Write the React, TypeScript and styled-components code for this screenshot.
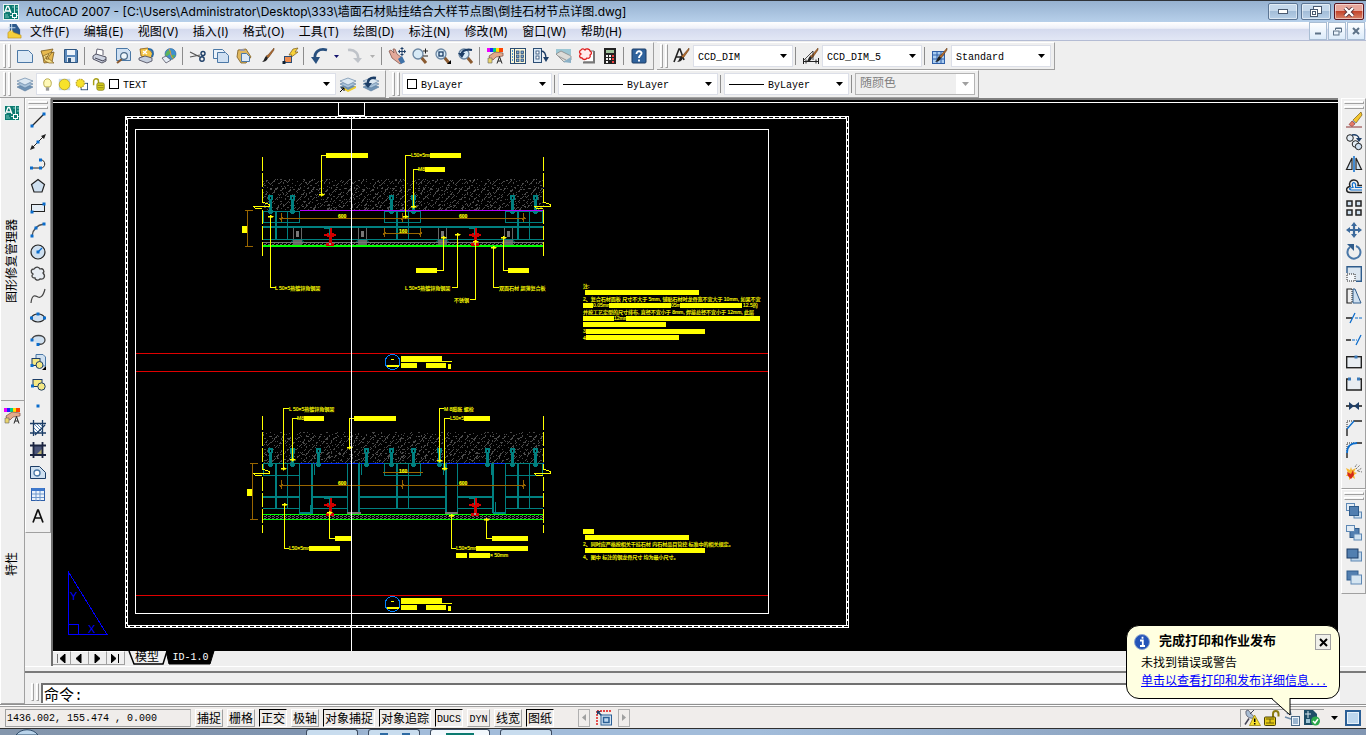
import React from 'react';
import styled, { createGlobalStyle, css } from 'styled-components';

const ui = `"Open Sans", "Noto Sans CJK SC", sans-serif`;
const wide = `Inter, "Noto Sans CJK SC", sans-serif`;
const mono = `"Liberation Mono", "Noto Sans CJK SC", monospace`;

const GlobalStyle = createGlobalStyle`
  *, *::before, *::after { box-sizing: border-box; }
  body { margin: 0; background: #efefef; color: #000; font-family: ${ui}; font-size: 12px; overflow: hidden; }
  button, input, select { font: inherit; color: inherit; margin: 0; padding: 0; border: 0; background: none; border-radius: 0; }
  svg { display: block; flex: none; }
`;

const Screen = styled.div`
  position: relative;
  display: flex;
  flex-direction: column;
  height: 100vh;
  overflow: hidden;
`;

/* ---------- title and menu ---------- */

const TitleBar = styled.header`
  display: flex;
  align-items: center;
  height: 22px;
  padding: 0 2px 0 3px;
  gap: 7px;
  border-top: 1px solid #2f3338;
  background: linear-gradient(#96b1d0, #b7d0ea);
`;
const Title = styled.h1`
  flex: 1;
  margin: 0;
  font-family: ${wide};
  font-size: 12px;
  line-height: 20px;
  font-weight: 400;
  white-space: nowrap;
`;
const WindowButtons = styled.div`
  display: flex;
  gap: 3px;
`;
const WindowButton = styled.button<{ $close?: boolean }>`
  display: grid;
  place-items: center;
  width: 30px;
  height: 17px;
  border: 1px solid ${p => (p.$close ? '#5a1420' : '#5b7594')};
  border-radius: 2px;
  background: ${p => (p.$close
    ? 'linear-gradient(#e8a79c 45%, #c4452c 50%, #d8836a)'
    : 'linear-gradient(#c5d8eb 45%, #a3bdd8 50%, #b8d0e8)')};
  box-shadow: inset 0 0 0 1px rgba(255, 255, 255, 0.5);
`;
const MenuBar = styled.nav`
  display: flex;
  align-items: center;
  height: 19px;
  padding-left: 7px;
  border-bottom: 1px solid #b4bcd4;
  background: linear-gradient(#fff 0, #eef0f8 35%, #d4daee 40%, #e2e7f5);
`;
const MenuList = styled.div`
  display: flex;
  flex: 1;
  padding-left: 1px;
`;
const MenuItem = styled.button`
  padding: 0 7px;
  height: 18px;
  font-family: ${wide};
  line-height: 20px;
  white-space: nowrap;
`;
const MdiButtons = styled.div`
  display: flex;
  gap: 1px;
  padding-right: 1px;
`;
const MdiButton = styled.button`
  display: grid;
  place-items: center;
  width: 18px;
  height: 18px;
  border: 1px solid #a9bdd3;
  background: linear-gradient(#fff, #dcebfa);
`;

/* ---------- toolbars ---------- */

const ToolbarArea = styled.div`
  height: 57px;
  display: flex;
  flex-direction: column;
  padding-top: 1px;
`;
const ToolbarRow = styled.div`
  display: flex;
  gap: 3px;
  height: 28px;
`;
const Toolbar = styled.div`
  display: flex;
  align-items: center;
  height: 28px;
  padding-right: 3px;
  border: 1px solid #fff;
  border-right-color: #a0a0a0;
  border-bottom-color: #a0a0a0;
  border-left: 0;
`;
const Grip = styled.div<{ $flat?: boolean }>`
  flex: none;
  display: flex;
  gap: 2px;
  ${p => (p.$flat
    ? css`flex-direction: column; width: 20px; margin: 2px auto 0;`
    : css`height: 24px; padding: 0 2px 0 3px;`)}
  &::before, &::after {
    content: '';
    ${p => (p.$flat ? css`height: 3px;` : css`width: 3px;`)}
    border: 1px solid #a0a0a0;
    border-top-color: #fff;
    border-left-color: #fff;
    background: #f6f6f6;
  }
`;
const ToolButton = styled.button<{ $w?: number }>`
  display: grid;
  place-items: center;
  flex: none;
  width: ${p => p.$w ?? 23}px;
  height: 22px;
`;
const Separator = styled.div`
  flex: none;
  width: 1px;
  height: 18px;
  margin: 0 3px 0 2px;
  background: #8c8c8c;
`;
const ComboBox = styled.label<{ $w: number; $off?: boolean }>`
  display: flex;
  align-items: center;
  gap: 4px;
  width: ${p => p.$w}px;
  height: 22px;
  padding: 0 5px 0 4px;
  border: 1px solid ${p => (p.$off ? '#b4b4b4' : '#dcdfe8')};
  background: ${p => (p.$off ? 'linear-gradient(90deg, #efefef 100px, #fff 100px)' : '#fff')};
  color: ${p => (p.$off ? '#808080' : '#000')};
`;
const ComboSelect = styled.select<{ $big?: boolean }>`
  appearance: none;
  flex: 1;
  min-width: 0;
  height: 20px;
  padding-top: ${p => (p.$big ? 0 : 2)}px;
  outline: 0;
  opacity: 1;
  font-family: ${mono};
  font-size: ${p => (p.$big ? 12 : 10)}px;
`;
const Swatch = styled.span`
  width: 10px;
  height: 10px;
  border: 1px solid #000;
  background: #fff;
`;
const LineSample = styled.span<{ $w: number }>`
  width: ${p => p.$w}px;
  height: 1px;
  background: #000;
`;

/* ---------- work area ---------- */

const Main = styled.main`
  flex: 1;
  min-height: 0;
  display: flex;
`;
const PaletteColumn = styled.aside`
  display: flex;
  flex-direction: column;
  width: 25px;
  border-right: 1px solid #a0a0a0;
  border-left: 1px solid #fff;
`;
const Palette = styled.section`
  flex: 1 1 0;
  display: flex;
  flex-direction: column;
  align-items: center;
  padding: 7px 2px 0 0;
  border-bottom: 1px solid #a0a0a0;
`;
const PaletteTitle = styled.div`
  flex: 1;
  writing-mode: vertical-rl;
  text-orientation: sideways;
  transform: rotate(180deg);
  text-align: center;
  line-height: 18px;
`;
const Workspace = styled.div`
  flex: 1;
  min-width: 0;
  display: flex;
  flex-direction: column;
`;
const WorkRow = styled.div`
  flex: 1;
  min-height: 0;
  display: flex;
`;
const SideColumn = styled.div<{ $w: number }>`
  width: ${p => p.$w}px;
  padding-left: ${p => (p.$w > 26 ? 3 : 0)}px;
  flex: none;
`;
const VerticalToolbar = styled.div`
  display: flex;
  flex-direction: column;
  align-items: center;
  padding-bottom: 5px;
  border: 1px solid #fff;
  border-right-color: #a0a0a0;
  border-bottom: 1px solid #a0a0a0;
`;
const Document = styled.div`
  flex: 1;
  min-width: 0;
  display: flex;
  flex-direction: column;
  border-left: 2px solid #707070;
  border-top: 2px solid #808080;
`;
const Canvas = styled.div`
  flex: 1;
  min-height: 0;
  background: #000;
  overflow: hidden;
`;
const TabRow = styled.div`
  display: flex;
  height: 15px;
`;
const TabNav = styled.button`
  display: grid;
  place-items: center;
  width: 18px;
  height: 14px;
  border-right: 1px solid #a0a0a0;
  border-bottom: 1px solid #a0a0a0;
  border-top: 1px solid #fff;
`;
const Tab = styled.button<{ $on?: boolean; $w: number }>`
  position: relative;
  width: ${p => p.$w}px;
  height: 14px;
  margin-left: ${p => (p.$on ? 3 : 0)}px;
  font-family: ${mono};
  font-size: ${p => (p.$on ? 12 : 10)}px;
  line-height: 14px;
  color: ${p => (p.$on ? '#000' : '#fff')};
`;
const TabShape = styled.svg`
  position: absolute;
  left: 0;
  top: 0;
  z-index: 0;
`;
const TabLabel = styled.span`
  position: relative;
`;
const Splitter = styled.div`
  height: 7px;
  border-top: 1px solid #fff;
  border-bottom: 2px solid #7a7a7a;
`;
const CommandRow = styled.div`
  display: flex;
  height: 31px;
  padding: 10px 26px 0 3px;
`;
const CommandGrip = styled(Grip)`
  height: 18px;
`;
const CommandInput = styled.input`
  flex: 1;
  height: 20px;
  padding-left: 1px;
  border-top: 2px solid #707070;
  border-left: 2px solid #707070;
  background: #fff;
  font-family: ${mono};
  font-size: 15px;
  outline: 0;
`;

/* ---------- status bar ---------- */

const StatusBar = styled.footer`
  display: flex;
  align-items: center;
  height: 25px;
  padding: 2px 4px 0 5px;
  border-top: 1px solid #909090;
  border-bottom: 1px solid #303030;
  background: #f0edeb;
  box-shadow: inset 0 1px #fff, inset 0 2px #a0a0a0;
`;
const Readout = styled.output`
  width: 186px;
  height: 18px;
  padding-left: 1px;
  border: 1px solid #a0a0a0;
  border-right-color: #c0c0c0;
  font-family: ${mono};
  font-size: 10px;
  line-height: 18px;
  white-space: pre;
`;
const Toggles = styled.div`
  display: flex;
  gap: 4px;
  margin-left: 4px;
`;
const Toggle = styled.button<{ $on?: boolean; $w: number; $small?: boolean }>`
  width: ${p => p.$w}px;
  height: 18px;
  padding-top: 2px;
  border: 1px solid;
  border-color: ${p => (p.$on ? '#000 #fff #fff #000' : '#fff #a0a0a0 #a0a0a0 #fff')};
  font-family: ${mono};
  font-size: ${p => (p.$small ? 10 : 12)}px;
  line-height: 16px;
  white-space: nowrap;
`;
const LayoutNav = styled.div`
  display: flex;
  align-items: center;
  gap: 4px;
  margin-left: 24px;
  flex: 1;
`;
const NavButton = styled.button`
  display: grid;
  place-items: center;
  width: 12px;
  height: 18px;
  border: 1px solid #b0b0b0;
`;
const Tray = styled.div`
  display: flex;
  align-items: center;
  gap: 4px;
  width: 84px;
  height: 18px;
  padding-left: 3px;
  border-top: 1px solid #a0a0a0;
  border-left: 1px solid #a0a0a0;
`;
const TaskBar = styled.div`
  display: flex;
  gap: 10px;
  height: 6px;
  background: linear-gradient(90deg, #8496ac, #7f94b0 300px, #a2bcda 380px, #a2bcda 760px, #8196b2);
`;
const StartArea = styled.div`
  width: 296px;
  padding-left: 16px;
`;
const TaskItem = styled.span<{ $on?: boolean }>`
  display: grid;
  justify-items: center;
  align-items: end;
  width: ${p => (p.$on ? 60 : 52)}px;
  height: 6px;
  border: 1px solid #3c4b60;
  border-bottom: 0;
  border-radius: 3px 3px 0 0;
  background: ${p => (p.$on ? '#f2f8fd' : '#c8dcee')};
`;

/* ---------- notification ---------- */

const Balloon = styled.section`
  position: absolute;
  right: 26px;
  bottom: 36px;
  width: 214px;
  height: 74px;
  padding: 6px 8px 0 7px;
  border: 1px solid #000;
  border-radius: 13px;
  background: #ffffe1;
`;
const BalloonHead = styled.div`
  display: flex;
  align-items: center;
  gap: 9px;
  height: 20px;
`;
const BalloonTitle = styled.h2`
  flex: 1;
  margin: 0;
  padding-bottom: 4px;
  font-size: 13px;
  line-height: 16px;
  font-weight: 700;
`;
const BalloonClose = styled.button`
  display: grid;
  place-items: center;
  width: 16px;
  height: 16px;
  border: 1px solid #a0a0a0;
  background: #f0f0ea;
`;
const BalloonBody = styled.div`
  padding: 3px 0 0 7px;
`;
const BalloonText = styled.p`
  margin: 0;
  line-height: 18px;
  font-family: ${mono};
  white-space: nowrap;
`;
const BalloonLink = styled.a`
  color: #00f;
  text-decoration: underline;
`;
const Dots = styled.span`
  font-size: 10px;
`;
const BalloonTail = styled.svg`
  position: absolute;
  right: 47px;
  top: 71px;
`;

/* ---------- icons ---------- */

const N = '#1c3d66';
const B = '#0a6ccc';
const L = '#cfe0f0';
const K = '#222';

const Dot = ({ x, y, c = B }: { x: number; y: number; c?: string }) => (
  <rect x={x - 1.5} y={y - 1.5} width={3} height={3} fill={c} stroke="none" />
);
const Ln = ({ d, c = K, w = 1, f = 'none', dash }: { d: string; c?: string; w?: number; f?: string; dash?: string }) => (
  <path d={d} stroke={c} strokeWidth={w} fill={f} strokeDasharray={dash} />
);
const Sheets = ({ y = 0 }: { y?: number }) => (
  <g stroke="#55779a" strokeWidth=".6">
    <path d={`M0 ${11 + y}l8-3 8 3-8 4z`} fill="#6f93b5" />
    <path d={`M0 ${8 + y}l8-3 8 3-8 4z`} fill="#a9c3da" />
    <path d={`M0 ${5 + y}l8-3 8 3-8 4z`} fill="#dce8f2" />
  </g>
);
const Brush = () => (
  <>
    <path d="M15 0l-6 7-2 1 2 2 1-1 5-7z" fill="#b06a2c" stroke="#5a3414" strokeWidth=".5" />
    <path d="M7 8l2 2c-1 3-4 4-6 4 2-1 2-4 4-6z" fill="#222" />
  </>
);
const Mag = () => (
  <>
    <path d="M9 9l5 6" stroke="#8a5a30" strokeWidth="3" />
    <circle cx="6" cy="6" r="5" fill="#d8eaf6" stroke="#6b86a2" strokeWidth="1.3" />
  </>
);

const icons: Record<string, React.ReactNode> = {
  app: <><rect width="16" height="16" fill="#e8f4f2" /><rect x="1" y="1" width="14" height="14" fill="#0b7a70" /><path d="M1.500 9L4 2.500h1.500L8 9M3 7h4" stroke="#fff" strokeWidth="1.300" fill="none" /><path d="M11.500 1v14M7 11.500h8" stroke="#bfe8e2" fill="none" /><path d="M9 3h2M13 3h2M13 6h2M2 11h3M2 13h4" stroke="#7cc4bb" fill="none" /><rect x="9.500" y="9.500" width="4" height="4" fill="#0b7a70" stroke="#fff" /></>,
  dwg: <><path d="M3 0h7l4 6v6H3z" fill="#2d5a8c" /><path d="M1 9l4-3 2 3 8 3v3H1z" fill="#f4cf3c" stroke="#b88a14" strokeWidth=".6" /><path d="M5 0v8M1 4h8" stroke="#cfe3f5" /></>,
  new: <path d="M.5 2.500h11l4 4v8H.5z" fill="#dce9f5" stroke="#4b78a6" />,
  open: <><path d="M1 3l12-2-2 4 3-1-2 10-8 1-1-6z" fill="#e7b94f" stroke="#7a5a1e" strokeWidth=".8" /><path d="M3 8l9-4-4 6 6 5-5 0-4-2z" fill="#f7e08b" stroke="#7a5a1e" strokeWidth=".7" /><path d="M9 6l-3 5M6 8v3h3" stroke="#8a6220" fill="none" /></>,
  save: <><path d="M1.500 1.500h12l1 1v12h-13z" fill="#5b89bb" stroke="#2d5580" /><rect x="4" y="2" width="8" height="5" fill="#eef4fa" /><rect x="4" y="9" width="8" height="5" fill="#dfe9f3" /><rect x="5" y="10" width="3" height="4" fill="#2d5580" /></>,
  print: <><path d="M4 7l1-6 6 1v5" fill="#fff" stroke="#556" strokeWidth=".9" /><path d="M1 8l3-2 10 3v4l-4 2-9-4z" fill="#cdd3e0" stroke="#445" strokeWidth=".9" /><path d="M3 10l8 3M11 13l3-2" stroke="#445" /></>,
  preview: <><path d="M1.500 .5h11l3 3v9h-14z" fill="#cfe0f2" stroke="#4b78a6" /><path d="M7 11l-5 4" stroke="#8a5a30" strokeWidth="2.200" /><circle cx="9" cy="8" r="3.400" fill="#eef6fb" stroke="#4b6a88" strokeWidth="1.200" /></>,
  publish: <><path d="M2 1l8-1 5 6-3 5-9-3z" fill="#f3c546" stroke="#8a5a14" strokeWidth=".8" /><path d="M5 3l4 3M9 2L5 6" stroke="#fff" strokeWidth="1.300" /><path d="M1 10l6-2 7 2v3l-5 2-8-3z" fill="#c6cfdd" stroke="#445" strokeWidth=".8" /><path d="M10 1c5 0 6 4 4 8" stroke="#2d6aa3" strokeWidth="2" fill="none" /></>,
  globe: <><circle cx="9.500" cy="6" r="5.500" fill="#3f8fd0" stroke="#2a5f92" strokeWidth=".6" /><path d="M6 3c3-2 6 1 3 3s-3 3-5 1zM10 8c2-2 4-1 4 0l-3 3z" fill="#5cb35a" /><path d="M8 1c2 2 1 8 5 10" stroke="#f0913a" fill="none" /><path d="M1 10l4-2 5 4-5 3z" fill="#e6edf5" stroke="#556" strokeWidth=".8" /></>,
  cut: <><path d="M0 4l10 5M0 9l10-2" stroke="#555" strokeWidth="1.200" /><circle cx="13" cy="5.500" r="2" fill="none" stroke={N} strokeWidth="1.400" /><circle cx="12" cy="11" r="2.200" fill="none" stroke={N} strokeWidth="1.400" /></>,
  copy: <><path d="M.5 1.500h9l2 2v7H.5z" fill="#eaf2fa" stroke="#4b78a6" /><path d="M4.500 4.500h8l3 3v7h-11z" fill="#cfe0f2" stroke="#4b78a6" /></>,
  paste: <><path d="M2 2l8-1 5 8-5 6H5L1 9z" fill="#e0b85e" stroke="#7a5a1e" strokeWidth=".8" /><path d="M5.500 5.500h5l3 3v5h-8z" fill="#dce9f5" stroke="#4b78a6" /><path d="M4 1h4l1 2H4z" fill="#99a" /></>,
  match: <Brush />,
  block: <><path d="M11 1l-4 6 3 0-3 4 9-7h-3l3-4z" fill="#f7d23a" stroke="#7a5a1e" strokeWidth=".7" /><rect x="2.500" y="8.500" width="7" height="6" fill="#f08c4c" stroke="#2b4d74" /><Dot x={2} y={14.5} c="#123" /></>,
  undo: <><path d="M16 2C8 0 3 4 4 11" fill="none" stroke="#274f7e" strokeWidth="2.800" /><path d="M0 9h9l-4 7z" fill="#274f7e" /></>,
  redo: <><path d="M1 2c7-1 11 4 10 10" fill="none" stroke="#bfc3c9" strokeWidth="2.600" /><path d="M6 10h9l-4 5z" fill="#bfc3c9" /></>,
  pan: <><path d="M0 3l2-1 3 3-1-4 2 0 2 5 4 3 2 5-3 2-4-3-4-3z" fill="#e3a99a" stroke="#7a4a40" strokeWidth=".7" /><path d="M9 11l4-3 3 6-4 2z" fill="#3f72a8" /><path d="M13 0v7M9.500 3.500h7" stroke={N} /><path d="M13-1l2 2h-4zM13 8l2-2h-4zM9 3.500l2-2v4zM17 3.500l-2-2v4z" fill={N} /></>,
  zoomrt: <><Mag /><path d="M11 3h5M13.500 .5v5M11 8h5" stroke={K} /></>,
  zoomwin: <><Mag /><rect x="4" y="4" width="4" height="4" fill="none" stroke={N} strokeWidth="1.300" /><path d="M16 12v4h-4z" fill="#000" /></>,
  zoomprev: <><Mag /><path d="M3 7c1-4 5-6 11-5" stroke={N} strokeWidth="2.200" fill="none" /><path d="M0 5h7l-3 5z" fill={N} /></>,
  props: <><rect width="3" height="4" fill="#e0f" /><rect x="3" width="3" height="4" fill="#22f" /><rect x="6" width="3" height="4" fill="#0c8" /><rect x="9" width="3" height="4" fill="#fd0" /><rect x="12" width="4" height="4" fill="#f40" /><path d="M2 8l6-4 8 1 0 3-7 1-3 3-3-1z" fill="#e3a98a" stroke="#7a4a40" strokeWidth=".7" /><path d="M1 10h4v5H1z" fill="#e9d36c" stroke="#666" strokeWidth=".6" /><path d="M10 15.500l2.500-7 2.500 7M11 13h3" stroke={K} fill="none" /></>,
  dc: <><rect x=".5" y=".5" width="15" height="15" fill="#fdf8d8" stroke="#2b4d74" /><path d="M4.500 1v14" stroke="#2b4d74" /><path d="M2 3h1M2 6h1M2 9h1M2 12h1" stroke={B} strokeWidth="1.500" /><g fill="#7faad4" stroke="#2b4d74" strokeWidth=".8"><rect x="6.500" y="3" width="2.500" height="2.500" /><rect x="11" y="3" width="2.500" height="2.500" /><rect x="6.500" y="7" width="2.500" height="2.500" /><rect x="11" y="7" width="2.500" height="2.500" /><rect x="6.500" y="11" width="2.500" height="2.500" /><rect x="11" y="11" width="2.500" height="2.500" /></g></>,
  tp: <><rect x=".5" y=".5" width="8" height="14" fill="#dce9f5" stroke="#2b4d74" /><g fill="#fff" stroke="#2b4d74" strokeWidth=".8"><rect x="3" y="3" width="3" height="3" /><rect x="3" y="8" width="3" height="3" /></g><path d="M8 3c4 0 5 3 5 8" stroke={N} fill="none" strokeWidth="1.400" /><path d="M10 9h6l-3 5z" fill={N} /></>,
  ssm: <><rect x="0" y="1" width="15" height="6" fill="#9cc7d4" /><path d="M0 6l5-3 10 5v4L8 14z" fill="#dcdcd8" stroke="#888" strokeWidth=".8" /><path d="M2 8l8 4" stroke="#999" /><path d="M7 14l8-5v6z" fill="#8bb0c6" /></>,
  markup: <><path d="M3 3h12v11H5" fill="#fff" stroke="#777" /><path d="M15 3v11.500H4" stroke="#777" strokeWidth="2" fill="none" /><path d="M2 2c1-2 3-1 4 0 1-2 5-1 5 1 2 1 2 3 0 4 1 2-1 4-3 3-1 2-4 2-5 0-3 0-3-3-1-4-2-1-2-3 0-4z" fill="#ffecec" stroke="#e02020" strokeWidth="1.300" /></>,
  calc: <><rect x="2" y="0" width="12" height="16" fill="#222" /><rect x="4" y="2" width="8" height="3" fill="#9ec29a" /><g fill="#f4f4f4"><rect x="4" y="7" width="2" height="2" /><rect x="7" y="7" width="2" height="2" /><rect x="4" y="10" width="2" height="2" /><rect x="7" y="10" width="2" height="2" /><rect x="4" y="13" width="2" height="2" /></g><g fill="#f04040"><rect x="10" y="7" width="2" height="2" /><rect x="10" y="10" width="2" height="2" /><rect x="10" y="13" width="2" height="2" /></g></>,
  help: <><rect x="1" y="1" width="14" height="14" rx="1" fill="#2f629c" stroke="#1c3d66" /><path d="M5.500 6c0-4 5.500-3 5-.5C10.500 7 8 7.500 8 10M8 11.500v2" stroke="#fff" strokeWidth="1.900" fill="none" /></>,
  textstyle: <><path d="M0 14L5 1h1l4 11M2 9h6" stroke={K} strokeWidth="1.600" fill="none" /><Brush /></>,
  dimstyle: <><Brush /><path d="M1 12l9-9v9" stroke={K} fill="none" strokeWidth=".8" /><path d="M0 13.500h16M.5 10v6M15.500 10v6M3 11.500v4M13 11.500v4" stroke={K} /></>,
  tablestyle: <><rect x=".5" y="3.500" width="12" height="12" fill="#a9cdf2" stroke="#2f5fa8" /><path d="M1 7h12M1 11h12M5 4v12M9 4v12" stroke="#2f5fa8" /><Brush /></>,
  layers: <Sheets />,
  layerCur: <><Sheets /><path d="M3 11l5 3 8-4v2l-8 4-5-3z" fill="#f2cf2e" /><path d="M0 16l4-4M1 12h3v3" stroke="#000" fill="none" /></>,
  layerPrev: <><Sheets /><path d="M5 9c-1-5 2-8 8-7" stroke={N} strokeWidth="2.400" fill="none" /><path d="M1 7h8l-4 5z" fill={N} /></>,
  bulb: <><path d="M5 11C2 8 3 1 8 1s6 7 3 10z" fill="#fff9b8" stroke="#a89a30" /><path d="M6 12.500h4M6 14.500h4" stroke="#777" strokeWidth="1.500" /></>,
  sun: <><rect x="1" y="1" width="14" height="14" fill="#c5d8ea" /><circle cx="8" cy="8" r="6.500" fill="#f7e22a" stroke="#b8a020" /></>,
  sunvp: <><rect x="7.500" y="6.500" width="8" height="8" fill="#fff" stroke={N} /><circle cx="6.500" cy="6.500" r="5" fill="#f7e22a" stroke="#c0a830" strokeDasharray="2 1" strokeWidth="1.600" /></>,
  lock: <><path d="M2 9V4c0-4 6-4 6 0v3" stroke="#a8a018" strokeWidth="1.800" fill="none" /><rect x="6" y="6" width="9" height="9" rx="2" fill="#d8d020" stroke="#807a10" /><path d="M7 9h7M7 12h7" stroke="#807a10" /></>,
  line: <><Ln d="M2 14L14 2" w={1.200} /><Dot x={2} y={14} /><Dot x={14} y={2} /></>,
  xline: <><Ln d="M1 15L15 1" /><path d="M0 16l2-5 3 3zM16 0l-5 2 3 3z" fill={K} /><Dot x={8} y={8} /></>,
  pline: <><Ln d="M2 12h9c5 0 5-8 0-8" /><Dot x={1.5} y={12} /><Dot x={10.5} y={12} /><Dot x={10.5} y={4} /></>,
  polygon: <path d="M8 1.500l6.500 5-2.500 7.500H4L1.500 6.500z" fill={L} stroke={K} strokeWidth="1.200" />,
  rect: <><rect x="1.500" y="4.500" width="13" height="7" fill="#e4edf5" stroke={K} /><Dot x={2} y={12} /><Dot x={14} y={4} /></>,
  arc: <><Ln d="M2 14C3 7 7 3 14 2" c="#555" w={1.300} /><Dot x={2} y={14} /><Dot x={6} y={6} /><Dot x={14} y={2} /></>,
  circle: <><circle cx="8" cy="8" r="7" fill={L} stroke={K} strokeWidth="1.200" /><Ln d="M8 8l4-4" c={B} w={1.300} /><Dot x={8} y={8} /></>,
  cloud: <path d="M4 3c2-3 5-2 6 0 3-1 5 2 3 4 3 3 1 7-3 6-2 2-5 1-5-1-3 0-4-2-2-4-3-2-2-5 1-5z" fill="#e8edf3" stroke="#444" strokeWidth="1.300" />,
  spline: <Ln d="M1 15C2 5 6 8 8 9s5 0 7-8" c="#444" w={1.200} />,
  ellipse: <><ellipse cx="8" cy="8" rx="6.500" ry="4" fill={L} stroke={K} strokeWidth="1.200" /><Dot x={1.5} y={8} /><Dot x={14.5} y={8} /><Dot x={8} y={4} /></>,
  earc: <><path d="M2 8c0-6 13-6 13 0 0 3-3 5-7 4" fill={L} stroke="#444" strokeWidth="1.300" /><Dot x={2} y={8} /><Dot x={8} y={12.5} /></>,
  insert: <><path d="M6 .5h7l2.500 2.500v9H6z" fill={L} stroke="#4b78a6" /><rect x="2" y="4.500" width="8" height="7" fill="#f5e883" stroke={N} /><circle cx="9.500" cy="11" r="3.500" fill="#f5e883" stroke={N} /><Dot x={2} y={11.5} /><path d="M16 12v4h-4z" fill="#000" /></>,
  mkblock: <><rect x="3" y="3.500" width="9" height="7" fill="#f5e883" stroke={N} /><circle cx="11.500" cy="10.500" r="3.700" fill="#f5e883" stroke={N} /><Dot x={2.5} y={10} /></>,
  point: <Dot x={8} y={8} />,
  hatch: <><rect x="3" y="4" width="10" height="9" fill="#fff" /><path d="M3 7l6 6M3 10l3 3M4 4l9 9M7 4l6 6M10 4l3 3" stroke="#5e8cba" /><Ln d="M0 3.500h16M0 13h16M3.500 0v16M12.500 0v16M5 15L15 5" c={N} w={1.300} /></>,
  gradient: <><rect x="3" y="4" width="10" height="9" fill="#4c567a" /><path d="M6 13L13 6v7z" fill="#b8b070" /><Ln d="M0 3.500h16M0 13h16M3.500 0v16M12.500 0v16" c="#1b2440" w={1.800} /></>,
  region: <><path d="M.5 2.500h9l6 6v6H.5z" fill={L} stroke={N} /><circle cx="7" cy="9" r="3" fill="#fff" stroke="#4b78a6" strokeWidth="1.300" /></>,
  table: <><rect x="1.500" y="2.500" width="13" height="12" fill="#eaf2fb" stroke="#2f5fa8" /><rect x="1.500" y="2" width="13" height="3" fill="#3f79cc" /><path d="M2 8h12M2 11.500h12M6 5v10M10 5v10" stroke="#6f97cc" /></>,
  mtext: <path d="M3 14.500L7.700 2h.6L13 14.500M4.500 10h7" stroke="#111" strokeWidth="1.700" fill="none" />,
  erase: <><path d="M0 15h16" stroke="#8a3030" /><path d="M15 0l-8 8 3 3 6-8z" fill="#f4c62e" stroke="#7a5a14" strokeWidth=".7" /><path d="M7 8l3 3-1 1-3-3z" fill="#9ab" /><path d="M6 9l3 3-3 2.500-3-2z" fill="#e57a68" stroke="#8a3030" strokeWidth=".6" /></>,
  copyobj: <><circle cx="4" cy="4" r="3.300" fill="#e4edf5" stroke={K} /><circle cx="9.500" cy="10" r="3.300" fill="#e4edf5" stroke={K} /><circle cx="12.500" cy="12.500" r="3.200" fill={L} stroke={K} /><path d="M6 1c4-1 7 1 7 4" stroke={N} fill="none" strokeWidth="1.400" /><path d="M10 4h6l-3 4z" fill={N} /></>,
  mirror: <><path d="M6 2v11.500H.5zM10 2v11.500h5.500z" fill={L} stroke={K} strokeWidth="1.200" /><Ln d="M8 0v16" c={B} w={1.500} /></>,
  offset: <><path d="M16 14.500H4c-4 0-5-5 0-6C1 0 14 0 12 7.500h4" fill="none" stroke={K} strokeWidth="1.400" /><path d="M16 12H5c-3-1-1-2.500 2-2.500C4 3 11 3 9.500 9.500H16" fill="none" stroke={B} strokeWidth="1.200" /></>,
  array: <g fill={L} stroke={K} strokeWidth="1.500"><rect x="1" y="1" width="5" height="5" /><rect x="10" y="1" width="5" height="5" /><rect x="1" y="10" width="5" height="5" /><rect x="10" y="10" width="5" height="5" /></g>,
  move: <><Ln d="M8 2v12M2 8h12" c="#3c6a9c" w={2.200} /><path d="M8 0l3 4H5zM8 16l3-4H5zM0 8l4-3v6zM16 8l-4-3v6z" fill="#3c6a9c" /></>,
  rotate: <><path d="M4 3a6.500 6.500 0 1 0 6-1" fill="none" stroke="#4a78a8" strokeWidth="2" /><path d="M1 0h7v7z" fill="#2f5c8c" /></>,
  scale: <><path d="M1 7V.7h14.300v14.600H10" fill="#dbe6f0" stroke="#2f5c8c" strokeWidth="1.400" /><rect x="1" y="8" width="8" height="7" fill="#f2f6fa" stroke={K} strokeDasharray="1 1" /></>,
  stretch: <><path d="M6 1H1v14h5" fill="none" stroke={K} strokeWidth="1.200" /><path d="M7 1v14h8L9 1z" fill={L} stroke="#2f5c8c" /><Ln d="M6 1v14" dash="1 1" /></>,
  trim: <><Ln d="M0 8h6" w={1.500} /><Ln d="M4 13L9 3" c={B} w={1.300} /><Ln d="M9 8h7" c={B} dash="3 1" /></>,
  extend: <><Ln d="M0 8h5" w={1.500} /><Ln d="M6 8h5" c={B} dash="3 1" /><Ln d="M10 13L15 3" c={B} w={1.300} /></>,
  breakpt: <><rect x=".7" y="2.700" width="14.600" height="11" fill="#e8edf2" stroke={K} strokeWidth="1.400" /><Dot x={10} y={3} c="#3c7ab8" /></>,
  brk: <><path d="M2 3H.7v11h14.600V3H14" fill="#e8edf2" stroke={K} strokeWidth="1.400" /><Dot x={3.5} y={3} c="#3c7ab8" /><Dot x={12.5} y={3} c="#3c7ab8" /></>,
  join: <><Ln d="M0 8h16" w={1.600} /><path d="M3 4l5 4-5 4zM13 4L8 8l5 4z" fill={N} /></>,
  chamfer: <><Ln d="M1 16V9M8 1h8" w={1.400} /><Ln d="M1 9V1h7" dash="1 1" /><Ln d="M1 9l7-8" c={B} w={1.300} /></>,
  fillet: <><Ln d="M1 16v-5M10 1h6" w={1.400} /><Ln d="M1 9V1h7" dash="1 1" /><Ln d="M1 11C1 4 5 1 11 1" c={B} w={1.800} /></>,
  explode: <><path d="M0 4l4 2 1-3 1 3 4-2-2 4 3 1-3 2 1 4-3-2-3 3v-4l-3 0 2-3z" fill="#f7b62e" /><path d="M1 8l4 2 2-4 1 5-3 4-3-3z" fill="#d42a1a" /><path d="M10 5l4-4M11 7l5-3M9 3l2-3M12 7l4 1" stroke="#777" strokeDasharray="2 1" /></>,
  o1: <><rect x=".5" y=".5" width="8" height="7" fill="#e3ecf4" stroke="#5e88b4" /><rect x="8" y="9" width="7.500" height="6" fill="#d0e2f0" stroke="#5e88b4" /><rect x="3.500" y="3.500" width="9" height="9" fill="#527fb0" stroke="#2f5c8c" /></>,
  o2: <><rect x="4" y="3.500" width="9" height="9" fill="#527fb0" stroke="#2f5c8c" /><rect x=".5" y=".5" width="8" height="6" fill="#e3ecf4" stroke="#5e88b4" /><rect x="8" y="9" width="7.500" height="6" fill="#d0e2f0" stroke="#5e88b4" /></>,
  o3: <><rect x="5" y="5" width="10.500" height="9" fill="#c0d6ea" stroke="#5e88b4" /><rect x="1" y="2" width="11" height="9" fill="#527fb0" stroke="#1c3d66" /></>,
  o4: <><rect x="1" y="2" width="11" height="9" fill="#527fb0" stroke="#2f5c8c" /><rect x="5" y="6" width="10.500" height="9" fill="#d5e5f1" stroke="#5e88b4" /></>,
  info: <><circle cx="8" cy="8" r="7.500" fill="#2454b8" stroke="#8fa6cf" /><path d="M6 6.500h2.800v5M6 12h5M8.500 2.800v2" stroke="#fff" strokeWidth="1.800" fill="none" /></>,
  dish: <><path d="M2 1c-1 6 4 8 9 7L4 0z" fill="#a9bdd3" stroke="#445" strokeWidth=".7" /><path d="M6 4l4-4" stroke="#445" /><path d="M1 14.500l4-6" stroke="#445" strokeWidth="1.500" /><path d="M10.500 5l6 10.500h-11z" fill="#f7e02e" stroke="#9a8410" strokeWidth=".8" /><path d="M10.700 8.500v3.500M10.700 13v1.400" stroke="#000" strokeWidth="1.500" /></>,
  padlock: <><path d="M9 7V4c0-4 5.500-4 5.500 0v2.500" stroke="#8a7a10" strokeWidth="2" fill="none" /><rect x=".5" y="7" width="11" height="8.500" rx="1" fill="#e3c816" stroke="#4a4208" /><path d="M6 9v4M2 9h8M2 13h8" stroke="#6a5c08" /></>,
  plot: <><path d="M3 4l3-3 1 4M1 7l6 2" stroke="#6d8cab" fill="none" strokeWidth="1.500" /><rect x="7.500" y="6.500" width="8" height="9" fill="#eef4fa" stroke="#4b6a88" /><path d="M9 9h5M9 11h5M9 13h5" stroke="#4b78a6" /></>,
  xref: <><path d="M0 0h9l4 4v11H0z" fill="#1e4e68" /><path d="M4 1v7M1 4h6" stroke="#d8e6ee" /><rect x="2" y="9" width="4" height="4" fill="#9ec4d4" /><circle cx="11.500" cy="11" r="4.500" fill="#2aa84a" /><path d="M9 11l2 2 3-4" stroke="#fff" strokeWidth="1.500" fill="none" /></>,
  maximize: <><rect x="1" y="1" width="14" height="14" fill="#bcd6ee" stroke="#2b5f96" strokeWidth="2" /><rect x="2.500" y="2.500" width="11" height="11" stroke="#e6f1fa" /></>,
  vpmax: <><path d="M1 1h14M1 1v14" stroke="#e01010" strokeDasharray="2 1" strokeWidth="1.400" /><path d="M1 1l5 5" stroke={N} strokeWidth="1.600" /><path d="M1 1h4l-4 4z" fill={N} /><rect x="5" y="5" width="10.500" height="10" fill="#d4e5f4" stroke="#2b5f96" /><rect x="7.500" y="7.500" width="5.500" height="5" fill="#bcd6ee" stroke="#2b5f96" strokeWidth="1.500" /></>,
};

const Icon = ({ name, size = 16 }: { name: string; size?: number }) => (
  <svg width={size} height={size} viewBox="0 0 16 16" fill="none" overflow="visible" aria-hidden="true">{icons[name]}</svg>
);
const Arrow = ({ c = '#000' }: { c?: string }) => (
  <svg width="7" height="4" viewBox="0 0 7 4" aria-hidden="true"><path d="M0 0h7L3.500 4z" fill={c} /></svg>
);

const Tool = ({ name }: { name: string }) => (
  <ToolButton type="button" aria-label={name}><Icon name={name} /></ToolButton>
);

interface ComboProps { label: string; value: string; w: number; off?: boolean; children?: React.ReactNode }
const Combo = ({ label, value, w, off, children }: ComboProps) => (
  <ComboBox $w={w} $off={off}>
    {children}
    <ComboSelect aria-label={label} disabled={off} $big={off} defaultValue={value}>
      <option>{value}</option>
    </ComboSelect>
    <Arrow c={off ? '#a0a0a0' : '#000'} />
  </ComboBox>
);

/* ---------- drawing ---------- */

const YEL = '#ffff00';
const TEAL = '#008080';
const DIM = '#996600';

const Bars = ({ r }: { r: number[][] }) => (
  <g fill={YEL}>{r.map(([x, y, w, h = 5], i) => <rect key={i} x={x} y={y} width={w} height={h} />)}</g>
);
const Note = ({ x, y, children }: { x: number; y: number; children: React.ReactNode }) => (
  <text x={x} y={y} fill={YEL} stroke={YEL} strokeWidth=".15" fontSize="5" fontFamily="Liberation Sans, Noto Sans CJK SC, sans-serif">{children}</text>
);
const Leader = ({ d }: { d: [number, number, number, number] }) => {
  const [x0, y0, x, y] = d;
  const s = y > y0 ? -1 : 1;
  return (
    <g>
      <path d={`M${x0} ${y0 + 0.5}H${x + 0.5}V${y}`} stroke={YEL} fill="none" />
      <path d={`M${x - 2} ${y + s}h5v${s}h-5zM${x} ${y}h1v${3 * s}h-1z`} fill={YEL} stroke={YEL} strokeWidth=".5" />
    </g>
  );
};
const Bolt = ({ x, y }: { x: number; y: number }) => (
  <g fill={TEAL}>
    <rect x={x - 2} y={y} width="5" height="5" />
    <rect x={x - 1} y={y + 4} width="3" height="12" />
    <rect x={x - 2} y={y + 15} width="5" height="3" />
    <rect x={x - 1} y={y + 18} width="3" height="1" />
    <rect x={x} y={y + 2} width="1" height="2" fill="#000" />
  </g>
);
const Pin = ({ x, y }: { x: number; y: number }) => (
  <g fill="#d40000">
    <rect x={x - 1} y={y} width="3" height="18" />
    <rect x={x - 6} y={y + 6} width="12" height="2" />
    <rect x={x - 3} y={y + 5} width="7" height="4" />
    <rect x={x - 4} y={y + 15} width="8" height="3" />
    <rect x={x - 1} y={y + 15} width="2" height="2" fill="#999" />
    <path d={`M${x - 6} ${y + .5}h5v6`} stroke={TEAL} fill="none" />
  </g>
);
const Clip = ({ x }: { x: number }) => (
  <g>
    <path d={`M${x - 3.5} 228v13M${x + 4.5} 228v13`} stroke="#666" />
    <rect x={x - 1} y="231" width="3" height="6" fill="#777" />
    <path d={`M${x - 7} 242h15l-4-3h-7z`} fill={TEAL} opacity=".6" />
    <rect x={x - 4} y="240" width="9" height="5" fill="#666" />
  </g>
);
const BreakLine = ({ x, top, mid, bottom, tip }: { x: number; top: number; mid: number; bottom: number; tip: number }) => (
  <g stroke={YEL} fill="none">
    <path d={`M${x + .5} ${top}V${mid}M${x + .5} ${mid + 8}V${bottom}`} strokeDasharray="14 2" />
    <path d={`M${x + .5} ${mid}l7 2.500v1.500h-${tip}l2 2.500h6`} />
  </g>
);
const Dimension = ({ y, a, b, marks }: { y: number; a: number; b: number; marks: number[] }) => (
  <g stroke={DIM} fill="none">
    <path d={`M${a} ${y + .5}H${b}`} />
    {marks.map(m => <path key={m} d={`M${m + .5} ${y - 5}v9M${m - 1} ${y + 2}l3-3`} />)}
  </g>
);
const DimHeight = ({ x, y0, y1 }: { x: number; y0: number; y1: number }) => (
  <path d={`M${x + .5} ${y0}V${y1}M${x - 2} ${y0 + .5}h8M${x - 2} ${y1 - .5}h8`} stroke={DIM} fill="none" />
);
const TitleTag = ({ y }: { y: number }) => (
  <g>
    <circle cx="392.500" cy={y + 8} r="7.500" fill="none" stroke="#0080ff" />
    <rect x="391" y={y + 5} width="3" height="1" fill={YEL} />
    <Bars r={[[387, y + 11, 12, 2], [401, y + 2, 41, 6], [401, y + 7, 51, 1], [401, y + 9, 16], [426, y + 9, 20], [448, y + 10, 3]]} />
  </g>
);

const Drawing = () => (
  <svg width="100%" height="100%" shapeRendering="crispEdges" role="img" aria-label="倒挂石材节点详图">
    <defs>
      <pattern id="concrete" width="37" height="31" patternUnits="userSpaceOnUse">
        <path d="M0 6l5-5M3 13l7-8M8 12l4-4M1 24l9-9M9 22l6-7M13 8l7-8M16 14l8-8M22 5l4-5M26 10l8-9M30 14l6-6M14 27l9-10M20 29l4-4M24 21l6-6M28 28l8-9M3 31l6-6M33 25l4-4M12 18l3-3M31 20l3-2M0 16l2-2M11 30l3-3" stroke="#4c4c4c" fill="none" strokeDasharray="4 1" />
        <path d="M3 3h1v1h-1zM11 2h2v1h-2zM20 11h1v1h-1zM6 20h2v1h-2zM28 7h1v1h-1zM18 23h1v2h-1zM34 15h1v1h-1zM25 25h2v1h-2zM9 27h1v1h-1zM15 4h1v1h-1zM30 24h1v1h-1z" fill="#555" />
      </pattern>
      <pattern id="grain" width="23" height="11" patternUnits="userSpaceOnUse">
        <path d="M1 1h1v1h-1zM4 3h2v1h-2zM9 0h1v2h-1zM13 4h1v1h-1zM17 2h2v1h-2zM21 5h1v1h-1zM2 7h1v1h-1zM7 6h1v2h-1zM11 9h2v1h-2zM16 7h1v1h-1zM19 9h1v1h-1zM5 10h1v1h-1zM14 0h1v1h-1zM10 5h1v1h-1zM22 1h1v1h-1z" fill="#484848" />
      </pattern>
      <pattern id="slab" width="4" height="2" patternUnits="userSpaceOnUse">
        <path d="M0 0h2v1H0zM2 1h1v1H2z" fill="#666" />
      </pattern>
    </defs>
    <path d="M0 2.500H4000" stroke="#fff" />
    <g transform="translate(-53 -100)">
      {/* sheet borders */}
      <rect x="126.500" y="117.500" width="721" height="509" fill="none" stroke="#fff" strokeWidth="3" />
      <rect x="126.500" y="117.500" width="721" height="509" fill="none" stroke="#000" strokeDasharray="4 2" />
      <rect x="135.500" y="129.500" width="633" height="484" fill="none" stroke="#fff" />
      <path d="M136 353.500H768M136 371.500H768M136 595.500H768" stroke="#e00000" />

      {/* upper section */}
      <rect x="263" y="179" width="281" height="31" fill="url(#concrete)" />
      <rect x="263" y="179" width="281" height="31" fill="url(#grain)" />
      {[270, 292, 391, 413, 512, 535].map(x => <Bolt key={x} x={x} y={195} />)}
      <path d="M263 226.500H544M263 227.500H544M263 239.500H544" stroke={TEAL} />
      <path d="M263.500 211v11.500H299.500V211zM384.500 211v11.500H420.500V211zM505.500 211v11.500H542.500V211z" stroke={TEAL} fill="none" />
      <path d="M276 211v28M397 211v28M518 211v28" stroke={TEAL} strokeWidth="2" />
      <path d="M287.500 211v28M408.500 211v28M529.500 211v28" stroke={TEAL} />
      <path d="M300 210.500H544" stroke="#b400ff" />
      {[297, 362, 442, 508].map(x => <Clip key={x} x={x} />)}
      <rect x="263" y="242" width="281" height="1" fill="#777" />
      <rect x="263" y="243" width="281" height="2" fill="url(#slab)" />
      <rect x="263" y="245" width="281" height="2" fill="#00ff00" />
      <Pin x={330} y={228} /><Pin x={475} y={228} />
      <Dimension y={218} a={279} b={526} marks={[281, 402, 523]} />
      <Dimension y={233} a={383} b={422} marks={[384, 420]} />
      <DimHeight x={247} y0={210} y1={247} />
      <BreakLine x={262} top={157} mid={202} bottom={258} tip={16} />
      <BreakLine x={543} top={157} mid={202} bottom={258} tip={16} />
      <Leader d={[326, 155, 321, 196]} /><Leader d={[411, 155, 405, 218]} /><Leader d={[419, 169, 413, 208]} />
      <Leader d={[276, 287, 270, 215]} /><Leader d={[452, 287, 457, 233]} /><Leader d={[470, 299, 475, 240]} />
      <Leader d={[437, 270, 443, 236]} /><Leader d={[508, 270, 503, 236]} /><Leader d={[499, 287, 493, 246]} />
      <Bars r={[[326, 153, 42], [430, 153, 31], [425, 167, 20], [416, 268, 21], [508, 268, 21], [242, 226, 5, 7]]} />
      <Note x={411} y={157}>L50×5mm</Note><Note x={418} y={171}>M8</Note>
      <Note x={275} y={290}>L 50×5热镀锌角钢架</Note><Note x={405} y={290}>L 50×5热镀锌角钢架</Note>
      <Note x={499} y={290}>双面石材 超薄复合板</Note><Note x={454} y={302}>不锈钢</Note>
      <g fontWeight="700"><Note x={338} y={218}>600</Note><Note x={459} y={218}>600</Note><Note x={399} y={233}>160</Note></g>
      <TitleTag y={354} />

      {/* lower section */}
      <rect x="263" y="432" width="281" height="31" fill="url(#concrete)" />
      <rect x="263" y="432" width="281" height="31" fill="url(#grain)" />
      <path d="M263 463.500H544" stroke="#0030ff" />
      {[270, 292, 318, 366, 391, 413, 439, 487, 512, 535].map(x => <Bolt key={x} x={x} y={448} />)}
      <path d="M263.500 463.500V475.500H299.500V463.500zM384.500 463.500V475.500H420.500V463.500zM505.500 463.500V475.500H542.500V463.500z" stroke={TEAL} fill="none" />
      <path d="M276 463v45M397 463v45M518 463v45M312 463v50M359 463v50M446 463v50M493 463v50" stroke={TEAL} strokeWidth="2" />
      <path d="M287.500 463v45M299.500 463v50M347.500 463v50M408.500 463v45M457.500 463v50M505.500 463v50M529.500 463v45M310 505v8M314 463v12M361 463v12M443 463v12M491 463v12M495 502v10" stroke={TEAL} />
      {[[263, 299], [312, 347], [360, 445], [458, 493], [505, 543]].map(([a, b]) => (
        <path key={a} d={`M${a} 496.500H${b}M${a} 497.500H${b}M${a} 508.500H${b}`} stroke={TEAL} />
      ))}
      <path d="M299 513H313M493 513H506" stroke={TEAL} strokeWidth="2" />
      <path d="M347 513H361M445 513H458" stroke="#777" strokeWidth="2" />
      <rect x="263" y="515" width="281" height="4" fill="url(#slab)" />
      <path d="M263 514.500H544M263 519.500H544" stroke="#00ff00" />
      <Pin x={330} y={498} /><Pin x={475} y={498} />
      <Dimension y={485} a={279} b={526} marks={[281, 402, 523]} />
      <Dimension y={472} a={383} b={423} marks={[]} />
      <DimHeight x={252} y0={463} y1={520} />
      <BreakLine x={262} top={416} mid={469} bottom={533} tip={16} />
      <BreakLine x={543} top={416} mid={469} bottom={533} tip={16} />
      <Leader d={[289, 408, 283, 470]} /><Leader d={[298, 418, 292, 461]} /><Leader d={[354, 418, 349, 449]} />
      <Leader d={[444, 408, 439, 462]} /><Leader d={[450, 418, 444, 470]} /><Leader d={[289, 548, 284, 503]} />
      <Leader d={[335, 538, 329, 511]} /><Leader d={[456, 548, 451, 514]} /><Leader d={[492, 538, 486, 518]} />
      <Bars r={[[304, 416, 20], [354, 416, 42], [464, 416, 26], [309, 546, 31], [335, 536, 16], [476, 546, 52], [456, 553, 11], [469, 553, 21], [492, 536, 36], [247, 489, 5, 7]]} />
      <Note x={289} y={411}>L 50×5热镀锌角钢架</Note><Note x={297} y={420}>M8</Note>
      <Note x={444} y={411}>M 8膨胀 螺栓</Note><Note x={450} y={420}>L50×5</Note>
      <Note x={289} y={550}>L50×5mm</Note><Note x={456} y={550}>L50×5mm</Note><Note x={490} y={557}>× 50mm</Note>
      <g fontWeight="700"><Note x={338} y={485}>600</Note><Note x={459} y={485}>600</Note><Note x={399} y={473}>160</Note></g>
      <TitleTag y={596} />

      {/* notes */}
      <Note x={583} y={288}>注:</Note>
      <Bars r={[[585, 290, 114], [583, 303, 10], [609, 303, 62], [680, 303, 62], [583, 316, 31], [626, 316, 134], [583, 322, 83], [586, 329, 119], [586, 335, 93]]} />
      <Note x={583} y={301}>2、复合石材面板 尺寸不大于 5mm, 铺贴石材时龙骨宽不宜大于 10mm, 如果不宜</Note>
      <Note x={593} y={307}>0.05mm</Note><Note x={671} y={307}>05m</Note><Note x={743} y={307}>12.5的</Note>
      <Note x={583} y={314}>并按工艺定型的尺寸排布, 直径不宜小于 8mm, 焊接总径不宜小于 12mm, 此层</Note>
      <Note x={614} y={320}>12mm</Note><Note x={583} y={333}>3</Note><Note x={583} y={340}>4</Note>
      <Bars r={[[583, 529, 11], [585, 535, 104], [585, 548, 120]]} />
      <Note x={583} y={546}>2、同时应严格按相关干挂石材 内石材品目管控 标准中的相关规定。</Note>
      <Note x={583} y={559}>4、图中 标注的钢龙骨尺寸 均为最小尺寸。</Note>

      {/* coordinate icon */}
      <path d="M68.500 572V634.500H107zM68.500 624.500H78.500V634.500" stroke="#0000ff" fill="none" />
      <g fill="#0000ff" fontSize="11" fontFamily="Liberation Sans, sans-serif"><text x="70" y="600">Y</text><text x="88" y="633">X</text></g>

      {/* cursor */}
      <path d="M351.500 116V1200M338.500 102V115.500H364.500V102" stroke="#fff" fill="none" />
    </g>
  </svg>
);

/* ---------- page ---------- */

const menus = ['文件(F)', '编辑(E)', '视图(V)', '插入(I)', '格式(O)', '工具(T)', '绘图(D)', '标注(N)', '修改(M)', '窗口(W)', '帮助(H)'];
const drawTools = ['line', 'xline', 'pline', 'polygon', 'rect', 'arc', 'circle', 'cloud', 'spline', 'ellipse', 'earc', 'insert', 'mkblock', 'point', 'hatch', 'gradient', 'region', 'table', 'mtext'];
const modifyTools = ['erase', 'copyobj', 'mirror', 'offset', 'array', 'move', 'rotate', 'scale', 'stretch', 'trim', 'extend', 'breakpt', 'brk', 'join', 'chamfer', 'fillet', 'explode'];
const toggles: { t: string; w: number; on?: boolean; small?: boolean }[] = [
  { t: '捕捉', w: 28 }, { t: '栅格', w: 28 }, { t: '正交', w: 28, on: true }, { t: '极轴', w: 28 },
  { t: '对象捕捉', w: 52, on: true }, { t: '对象追踪', w: 52, on: true }, { t: 'DUCS', w: 28, on: true, small: true },
  { t: 'DYN', w: 23, small: true }, { t: '线宽', w: 28 }, { t: '图纸', w: 28, on: true },
];
const navShapes = ['M0 0v9M8 0v9L3 4.500z', 'M6 0v9L1 4.500z', 'M2 0v9l5-4.500z', 'M0 0v9l5-4.500zM7.500 0v9'];

export default function App() {
  return (
    <Screen>
      <GlobalStyle />
      <TitleBar>
        <Icon name="app" />
        <Title>AutoCAD 2007 - [C:\Users\Administrator\Desktop\333\墙面石材贴挂结合大样节点图\倒挂石材节点详图.dwg]</Title>
        <WindowButtons>
          <WindowButton aria-label="最小化"><svg width="10" height="5"><rect x=".5" y=".5" width="9" height="4" fill="#fff" stroke="#4a5a70" /></svg></WindowButton>
          <WindowButton aria-label="还原"><svg width="12" height="11" fill="#fff" stroke="#4a5a70"><rect x="3.500" y=".5" width="8" height="7" /><rect x=".5" y="3.500" width="7" height="7" /><rect x="2.500" y="5.500" width="3" height="3" /></svg></WindowButton>
          <WindowButton aria-label="关闭" $close><svg width="12" height="10"><path d="M2 1l8 8M10 1L2 9" stroke="#553038" strokeWidth="4" /><path d="M2 1l8 8M10 1L2 9" stroke="#fff" strokeWidth="2.400" /></svg></WindowButton>
        </WindowButtons>
      </TitleBar>
      <MenuBar>
        <Icon name="dwg" size={15} />
        <MenuList>{menus.map(m => <MenuItem key={m} type="button">{m}</MenuItem>)}</MenuList>
        <MdiButtons>
          <MdiButton aria-label="最小化图形"><svg width="8" height="8"><path d="M1 6.500h6" stroke="#5d7288" strokeWidth="2" /></svg></MdiButton>
          <MdiButton aria-label="还原图形"><svg width="9" height="9" fill="none" stroke="#5d7288"><path d="M2.500 3V1h6v4h-2M2 1.500h6" /><rect x=".5" y="4" width="5.500" height="4" /></svg></MdiButton>
          <MdiButton aria-label="关闭图形"><svg width="8" height="8"><path d="M1 1l6 6M7 1L1 7" stroke="#5d7288" strokeWidth="2" /></svg></MdiButton>
        </MdiButtons>
      </MenuBar>

      <ToolbarArea>
        <ToolbarRow>
          <Toolbar>
            <Grip />
            {['new', 'open', 'save'].map(n => <Tool key={n} name={n} />)}
            <Separator />
            {['print', 'preview', 'publish', 'globe'].map(n => <Tool key={n} name={n} />)}
            <Separator />
            {['cut', 'copy', 'paste', 'match', 'block'].map(n => <Tool key={n} name={n} />)}
            <Separator />
            <Tool name="undo" />
            <ToolButton $w={13} aria-label="放弃列表"><svg width="5" height="3"><path d="M0 0h5L2.500 3z" fill="#14146e" /></svg></ToolButton>
            <Tool name="redo" />
            <ToolButton $w={13} aria-label="重做列表"><svg width="5" height="3"><path d="M0 0h5L2.500 3z" fill="#b0b0b0" /></svg></ToolButton>
            <Separator />
            {['pan', 'zoomrt', 'zoomwin', 'zoomprev'].map(n => <Tool key={n} name={n} />)}
            <Separator />
            {['props', 'dc', 'tp', 'ssm', 'markup', 'calc'].map(n => <Tool key={n} name={n} />)}
            <Separator />
            <Tool name="help" />
          </Toolbar>
          <Toolbar>
            <Grip />
            <Tool name="textstyle" />
            <Combo label="文字样式" value="CCD_DIM" w={100} />
            <Separator />
            <Tool name="dimstyle" />
            <Combo label="标注样式" value="CCD_DIM_5" w={100} />
            <Separator />
            <Tool name="tablestyle" />
            <Combo label="表格样式" value="Standard" w={100} />
          </Toolbar>
        </ToolbarRow>
        <ToolbarRow>
          <Toolbar>
            <Grip />
            <Tool name="layers" />
            <Combo label="图层" value="TEXT" w={300}>
              <Icon name="bulb" size={13} /><Icon name="sun" size={13} /><Icon name="sunvp" size={13} /><Icon name="lock" size={13} /><Swatch />
            </Combo>
            <Tool name="layerCur" />
            <Tool name="layerPrev" />
          </Toolbar>
          <Toolbar>
            <Grip />
            <Combo label="颜色" value="ByLayer" w={150}><Swatch /></Combo>
            <Separator />
            <Combo label="线型" value="ByLayer" w={160}><LineSample $w={60} /></Combo>
            <Separator />
            <Combo label="线宽" value="ByLayer" w={125}><LineSample $w={35} /></Combo>
            <Separator />
            <Combo label="打印样式" value="随颜色" w={120} off />
          </Toolbar>
        </ToolbarRow>
      </ToolbarArea>

      <Main>
        <PaletteColumn>
          <Palette><Icon name="app" /><PaletteTitle>图形修复管理器</PaletteTitle></Palette>
          <Palette><Icon name="props" /><PaletteTitle>特性</PaletteTitle></Palette>
        </PaletteColumn>
        <Workspace>
          <WorkRow>
            <SideColumn $w={26}>
              <VerticalToolbar>
                <Grip $flat />
                {drawTools.map(n => <Tool key={n} name={n} />)}
              </VerticalToolbar>
            </SideColumn>
            <Document>
              <Canvas><Drawing /></Canvas>
              <TabRow>
                {navShapes.map((d, i) => (
                  <TabNav key={i} aria-label={`布局导航 ${i + 1}`}><svg width="9" height="9"><path d={d} fill="#000" stroke="#000" /></svg></TabNav>
                ))}
                <Tab $on $w={38}>
                  <TabShape width="40" height="14"><path d="M1 0l5 13h29l4-13" fill="#efefef" stroke="#000" strokeWidth="1.500" /></TabShape>
                  <TabLabel>模型</TabLabel>
                </Tab>
                <Tab $w={49}>
                  <TabShape width="49" height="14"><path d="M0 0l3 13h41l4-13z" fill="#000" stroke="#000" /></TabShape>
                  <TabLabel>ID-1.0</TabLabel>
                </Tab>
              </TabRow>
            </Document>
            <SideColumn $w={28}>
              <VerticalToolbar>
                <Grip $flat />
                {modifyTools.map(n => <Tool key={n} name={n} />)}
              </VerticalToolbar>
              <VerticalToolbar>
                <Grip $flat />
                {['o1', 'o2', 'o3', 'o4'].map(n => <Tool key={n} name={n} />)}
              </VerticalToolbar>
            </SideColumn>
          </WorkRow>
          <Splitter />
          <CommandRow>
            <CommandGrip />
            <CommandInput aria-label="命令行" defaultValue="命令:" />
          </CommandRow>
        </Workspace>
      </Main>

      <StatusBar>
        <Readout>1436.002, 155.474 , 0.000</Readout>
        <Toggles>
          {toggles.map(b => <Toggle key={b.t} type="button" $on={b.on} $w={b.w} $small={b.small}>{b.t}</Toggle>)}
        </Toggles>
        <LayoutNav>
          <NavButton aria-label="上一个"><svg width="4" height="7"><path d="M4 0v7L0 3.500z" fill="#a0a0a0" /></svg></NavButton>
          <ToolButton $w={20} aria-label="最大化视口"><Icon name="vpmax" /></ToolButton>
          <NavButton aria-label="下一个"><svg width="4" height="7"><path d="M0 0v7l4-3.500z" fill="#a0a0a0" /></svg></NavButton>
        </LayoutNav>
        <Tray>
          <Icon name="dish" /><Icon name="padlock" /><Icon name="plot" /><Icon name="xref" />
        </Tray>
        <ToolButton $w={20} aria-label="状态栏菜单"><Arrow /></ToolButton>
        <ToolButton $w={18} aria-label="全屏显示"><Icon name="maximize" /></ToolButton>
      </StatusBar>
      <TaskBar>
        <StartArea><svg width="22" height="6"><path d="M0 6C5-1 17-1 22 6z" fill="#b9d3ea" stroke="#2d4a68" /></svg></StartArea>
        <TaskItem />
        <TaskItem><svg width="32" height="2"><path d="M2 1h8M24 1h8" stroke="#2d6aa3" strokeWidth="2" /></svg></TaskItem>
        <TaskItem $on><svg width="28" height="2"><path d="M0 1h28" stroke="#0b7a70" strokeWidth="2" /></svg></TaskItem>
        <TaskItem />
      </TaskBar>

      <Balloon>
        <BalloonHead>
          <Icon name="info" />
          <BalloonTitle>完成打印和作业发布</BalloonTitle>
          <BalloonClose aria-label="关闭通知"><svg width="9" height="9"><path d="M1 1l7 7M8 1L1 8" stroke="#000" strokeWidth="2" /></svg></BalloonClose>
        </BalloonHead>
        <BalloonBody>
          <BalloonText>未找到错误或警告</BalloonText>
          <BalloonText><BalloonLink href="#details">单击以查看打印和发布详细信息<Dots>...</Dots></BalloonLink></BalloonText>
        </BalloonBody>
        <BalloonTail width="22" height="20"><path d="M1 0h19v18z" fill="#ffffe1" /><path d="M1 1l19 17V1" fill="none" stroke="#000" /></BalloonTail>
      </Balloon>
    </Screen>
  );
}
